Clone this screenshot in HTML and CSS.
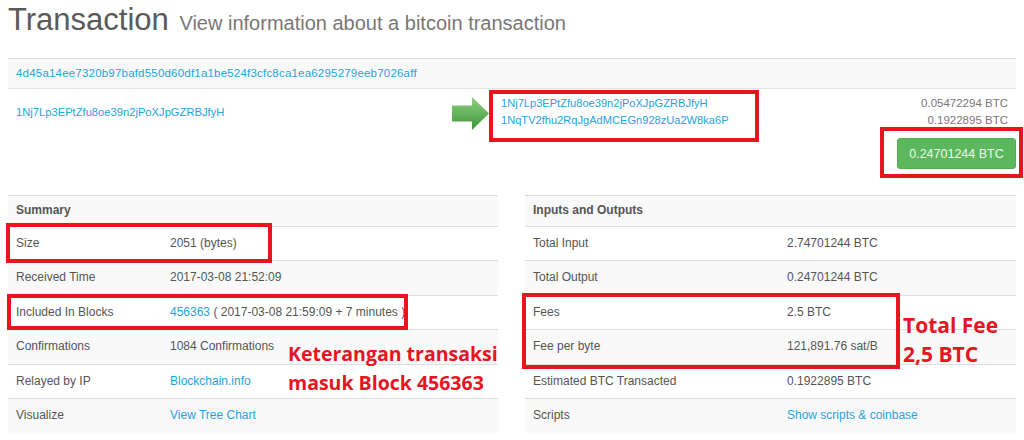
FILE: index.html
```html
<!DOCTYPE html>
<html lang="en">
<head>
    <meta charset="UTF-8">
    <title>Transaction</title>
    <link rel="stylesheet" href="styles.css">
</head>
<body>
<div class="page">
    <h1 class="title">Transaction <small>View information about a bitcoin transaction</small></h1>

    <div class="tx-hash"><a href="#">4d45a14ee7320b97bafd550d60df1a1be524f3cfc8ca1ea6295279eeb7026aff</a></div>

    <div class="tx-io">
        <div class="tx-in"><a href="#">1Nj7Lp3EPtZfu8oe39n2jPoXJpGZRBJfyH</a></div>
        <div class="tx-arrow">
            <svg width="38" height="33" viewBox="0 0 38 33">
                <defs>
                    <linearGradient id="ag" x1="0" y1="0" x2="0" y2="1">
                        <stop offset="0" stop-color="#8fd07f"/>
                        <stop offset="1" stop-color="#3d963a"/>
                    </linearGradient>
                </defs>
                <polygon points="0,8.5 20,8.5 20,0 37,16.5 20,33 20,24.5 0,24.5" fill="url(#ag)"/>
            </svg>
        </div>
        <div class="tx-out">
            <div class="out-row"><a href="#">1Nj7Lp3EPtZfu8oe39n2jPoXJpGZRBJfyH</a><span>0.05472294 BTC</span></div>
            <div class="out-row"><a href="#">1NqTV2fhu2RqJgAdMCEGn928zUa2W8ka6P</a><span>0.1922895 BTC</span></div>
        </div>
    </div>
    <div class="tx-total"><span class="btn-total">0.24701244 BTC</span></div>

    <div class="tables">
        <table class="info info-left">
            <colgroup><col class="col-lbl"><col></colgroup>
            <tr><th colspan="2">Summary</th></tr>
            <tr><td>Size</td><td>2051 (bytes)</td></tr>
            <tr><td>Received Time</td><td>2017-03-08 21:52:09</td></tr>
            <tr><td>Included In Blocks</td><td><a href="#">456363</a> ( 2017-03-08 21:59:09 + 7 minutes )</td></tr>
            <tr><td>Confirmations</td><td>1084 Confirmations</td></tr>
            <tr><td>Relayed by IP</td><td><a href="#">Blockchain.info</a></td></tr>
            <tr><td>Visualize</td><td><a href="#">View Tree Chart</a></td></tr>
        </table>
        <table class="info info-right">
            <colgroup><col class="col-lbl"><col></colgroup>
            <tr><th colspan="2">Inputs and Outputs</th></tr>
            <tr><td>Total Input</td><td>2.74701244 BTC</td></tr>
            <tr><td>Total Output</td><td>0.24701244 BTC</td></tr>
            <tr><td>Fees</td><td>2.5 BTC</td></tr>
            <tr><td>Fee per byte</td><td>121,891.76 sat/B</td></tr>
            <tr><td>Estimated BTC Transacted</td><td>0.1922895 BTC</td></tr>
            <tr><td>Scripts</td><td><a href="#">Show scripts &amp; coinbase</a></td></tr>
        </table>
    </div>

    <!-- anotasi merah di atas screenshot -->
    <div class="mark mark-outs"></div>
    <div class="mark mark-total"></div>
    <div class="mark mark-size"></div>
    <div class="mark mark-block"></div>
    <div class="mark mark-fees"></div>
    <div class="note note-block">Keterangan transaksi<br>masuk Block 456363</div>
    <div class="note note-fee">Total Fee<br>2,5 BTC</div>
</div>
</body>
</html>
```

FILE: styles.css
```css
*{
    margin: 0;
    padding: 0;
    box-sizing: border-box;
}
body{
    background: #fff;
    font-family: "Liberation Sans", Arial, sans-serif;
    font-size: 12px;
    color: #555;
}
a{
    color: #27a3dd;
    text-decoration: none;
}
.page{
    position: relative;
    width: 1024px;
    height: 440px;
    padding: 0 8px;
    overflow: hidden;
}
.title{
    margin-top: 2px;
    font-size: 31px;
    line-height: 36px;
    font-weight: normal;
    color: #5a5a5a;
}
.title small{
    font-size: 20px;
    color: #777;
    margin-left: 2px;
}
.tx-hash{
    margin-top: 17px;
    background: #f9f9f9;
    border-top: 1px solid #ddd;
    border-bottom: 1px solid #e6e6e6;
    padding: 6px 8px;
    line-height: 17px;
    font-size: 11.5px;
    letter-spacing: 0.2px;
}
.tx-io{
    display: flex;
    padding: 6px 8px 0;
    line-height: 17px;
    font-size: 11.5px;
}
.tx-in{
    width: 436px;
    display: flex;
    align-items: center;
}
.tx-in a{
    font-size: 11.2px;
}
.tx-arrow{
    width: 49px;
    padding-top: 2px;
}
.tx-arrow svg{
    display: block;
}
.tx-out{
    flex: 1;
}
.out-row{
    display: flex;
    justify-content: space-between;
}
.out-row a{
    font-size: 11.1px;
}
.out-row span{
    color: #777;
}
.tx-total{
    display: flex;
    justify-content: flex-end;
    margin-top: 8px;
}
.btn-total{
    display: inline-block;
    width: 119px;
    height: 31px;
    line-height: 31px;
    text-align: center;
    background: #5cb85c;
    border: 1px solid #52ad52;
    border-radius: 3px;
    color: #eef8ee;
    font-size: 12.5px;
}
.tables{
    display: flex;
    justify-content: space-between;
    margin-top: 26px;
}
.info{
    border-collapse: collapse;
    table-layout: fixed;
    line-height: 17.5px;
}
.info-left{
    width: 490px;
}
.info-right{
    width: 491px;
}
.info th{
    text-align: left;
    font-weight: bold;
    padding: 6px 8px;
    border-top: 1px solid #ddd;
    color: #555;
}
.info td{
    padding: 8px;
    border-top: 1px solid #ddd;
    color: #555;
    white-space: nowrap;
}
.info tr:nth-child(odd){
    background: #f9f9f9;
}
.info-left .col-lbl{
    width: 154px;
}
.info-right .col-lbl{
    width: 254px;
}
.mark{
    position: absolute;
    border: 4px solid #e8141e;
}
.mark-outs{
    left: 489px;
    top: 90px;
    width: 270px;
    height: 52px;
}
.mark-total{
    left: 880px;
    top: 127px;
    width: 143px;
    height: 51px;
}
.mark-size{
    left: 6px;
    top: 223px;
    width: 266px;
    height: 40px;
}
.mark-block{
    left: 7px;
    top: 294px;
    width: 401px;
    height: 36px;
}
.mark-fees{
    left: 522px;
    top: 293px;
    width: 378px;
    height: 76px;
}
.note{
    position: absolute;
    color: #e8141e;
    font-family: "Open Sans", sans-serif;
    font-weight: 700;
    font-size: 19.5px;
    line-height: 29px;
}
.note-block{
    left: 288px;
    top: 339px;
}
.note-fee{
    left: 903px;
    top: 311px;
    font-size: 21px;
}
```
